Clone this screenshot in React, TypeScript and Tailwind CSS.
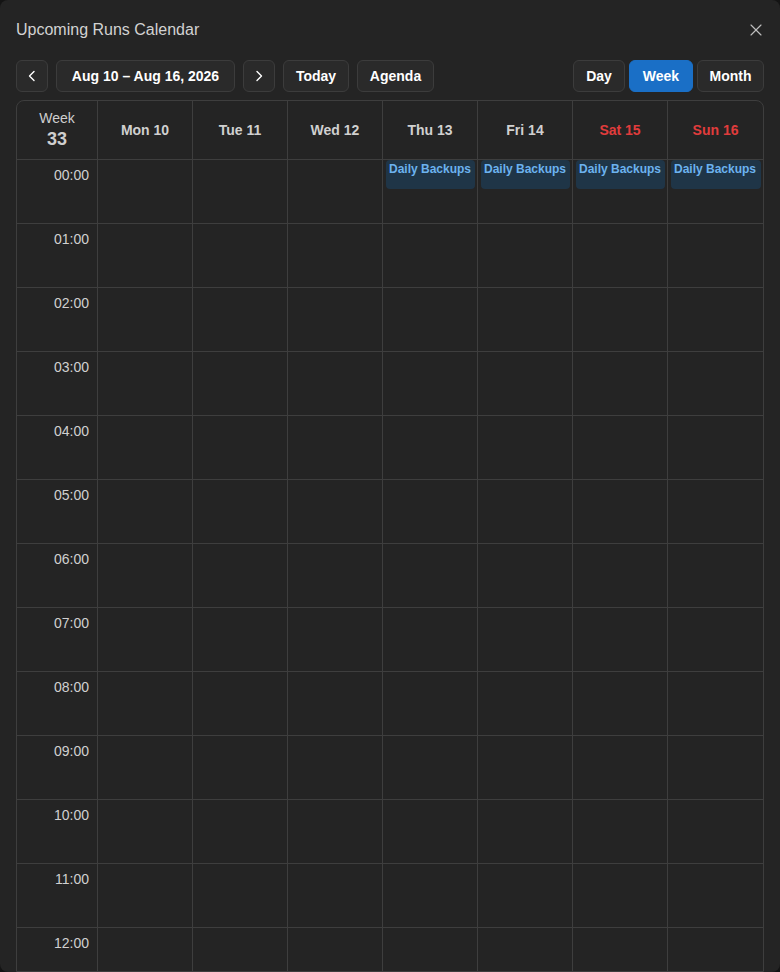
import { X } from "lucide-react";

const days = [
  { label: "Mon 10", weekend: false, backup: false },
  { label: "Tue 11", weekend: false, backup: false },
  { label: "Wed 12", weekend: false, backup: false },
  { label: "Thu 13", weekend: false, backup: true },
  { label: "Fri 14", weekend: false, backup: true },
  { label: "Sat 15", weekend: true, backup: true },
  { label: "Sun 16", weekend: true, backup: true },
];

const hours = Array.from({ length: 24 }, (_, i) => `${String(i).padStart(2, "0")}:00`);

function Chevron({ dir }: { dir: "left" | "right" }) {
  return (
    <svg viewBox="0 0 16 16" className="w-4 h-4 shrink-0" fill="none" stroke="currentColor" strokeWidth={1.4} strokeLinecap="round" strokeLinejoin="round">
      {dir === "left" ? <path d="M10 3.5 5.5 8l4.5 4.5" /> : <path d="M6 3.5 10.5 8 6 12.5" />}
    </svg>
  );
}

function ToolButton({ children, active = false, className = "" }: { children: React.ReactNode; active?: boolean; className?: string }) {
  return (
    <button
      className={`h-8 rounded-md border text-sm font-bold flex items-center justify-center ${
        active ? "bg-[#1a6fc6] border-[#1a6fc6] text-white" : "bg-[#2a2a2a] border-[#3c3c3c] text-white"
      } ${className}`}
    >
      {children}
    </button>
  );
}

export default function App() {
  return (
    <div className="bg-[#141414] h-screen font-[family-name:'Liberation_Sans',Arial,sans-serif]">
      <div className="h-full bg-[#242424] rounded-lg flex flex-col px-4 overflow-hidden">
        {/* Title bar */}
        <div className="flex items-center justify-between h-[60px]">
          <h2 className="text-base text-[#d2d2d2]">Upcoming Runs Calendar</h2>
          <X size={20} strokeWidth={1.4} className="text-[#bdbdbd] -mr-0.5" />
        </div>

        {/* Toolbar */}
        <div className="flex items-center justify-between">
          <div className="flex items-center gap-2">
            <ToolButton className="w-8">
              <Chevron dir="left" />
            </ToolButton>
            <ToolButton className="w-[179px]">Aug 10 – Aug 16, 2026</ToolButton>
            <ToolButton className="w-8">
              <Chevron dir="right" />
            </ToolButton>
            <ToolButton className="w-[66px]">Today</ToolButton>
            <ToolButton className="w-[77px]">Agenda</ToolButton>
          </div>
          <div className="flex items-center gap-1">
            <ToolButton className="w-[52px]">Day</ToolButton>
            <ToolButton active className="w-[64px]">Week</ToolButton>
            <ToolButton className="w-[67px]">Month</ToolButton>
          </div>
        </div>

        {/* Week grid */}
        <div className="mt-2 flex-1 overflow-hidden border border-[#3e3e3e] rounded-t-lg">
          <div className="grid grid-cols-[81px_repeat(7,1fr)]">
            <div className="h-[59px] border-r border-b border-[#3e3e3e] flex flex-col items-center justify-center gap-px text-[#cfcfcf]">
              <span className="text-sm leading-4">Week</span>
              <span className="text-lg font-bold leading-6">33</span>
            </div>
            {days.map((d, i) => (
              <div
                key={d.label}
                className={`h-[59px] border-b border-[#3e3e3e] flex items-center justify-center text-sm font-bold ${
                  i < 6 ? "border-r" : ""
                } ${d.weekend ? "text-[#e03c3c]" : "text-[#d0d0d0]"}`}
              >
                {d.label}
              </div>
            ))}

            {hours.map((h) => (
              <div key={h} className="contents">
                <div className="h-16 border-r border-b border-[#3e3e3e] text-right pr-2 pt-[5px] text-sm text-[#d0d0d0]">
                  {h}
                </div>
                {days.map((d, i) => (
                  <div
                    key={d.label}
                    className={`h-16 border-b border-[#3e3e3e] pl-[3px] pr-[2px] ${i < 6 ? "border-r" : ""}`}
                  >
                    {h === "00:00" && d.backup && (
                      <div className="h-[29px] rounded bg-[#1f3547] px-[3px] pt-px text-xs font-bold text-[#6cb2ef] whitespace-nowrap overflow-hidden">
                        Daily Backups
                      </div>
                    )}
                  </div>
                ))}
              </div>
            ))}
          </div>
        </div>
      </div>
    </div>
  );
}
